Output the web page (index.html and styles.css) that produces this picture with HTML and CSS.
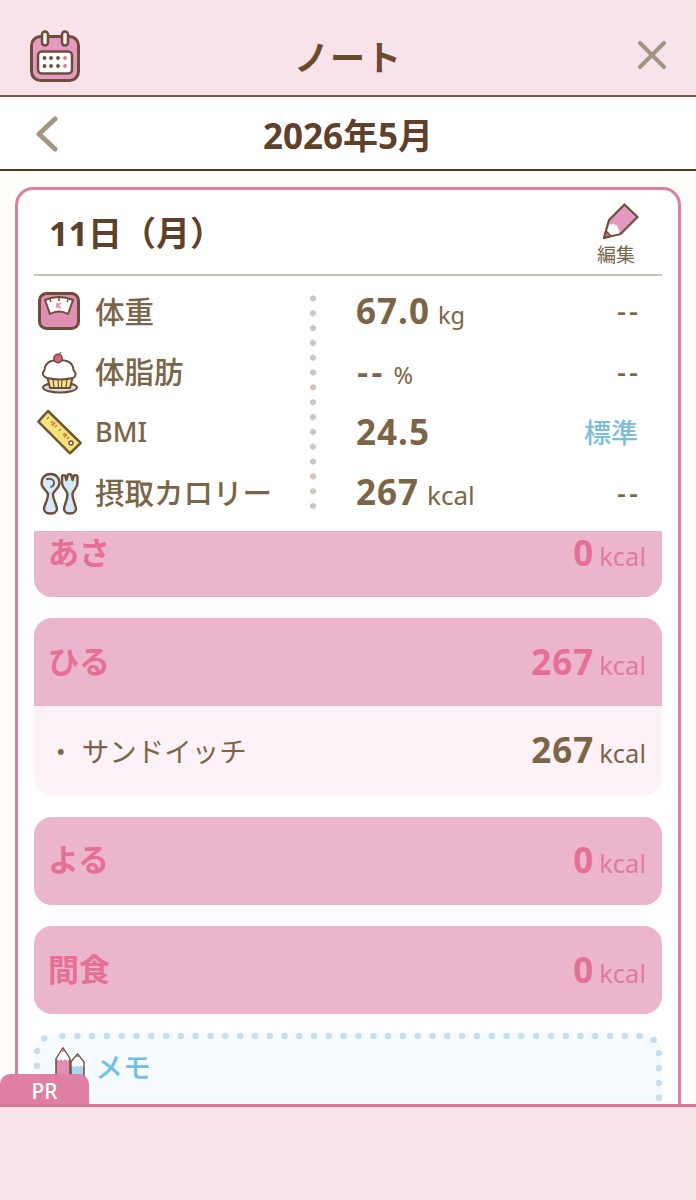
FILE: index.html
```html
<!DOCTYPE html>
<html lang="ja">
<head>
  <meta charset="UTF-8">
  <title>ノート</title>
  <link rel="stylesheet" href="styles.css">
</head>
<body>
  <header class="top-bar">
    <svg class="icon-calendar" viewBox="0 0 50 52">
      <rect x="1.500" y="6.500" width="47" height="44" rx="9" fill="#e49ac0" stroke="#6e4c3a" stroke-width="3"/>
      <rect x="12" y="1.500" width="6" height="14" rx="3" fill="#fdf3ec" stroke="#6e4c3a" stroke-width="2.500"/>
      <rect x="32" y="1.500" width="6" height="14" rx="3" fill="#fdf3ec" stroke="#6e4c3a" stroke-width="2.500"/>
      <rect x="8" y="21.500" width="34" height="22" rx="4" fill="#fff" stroke="#6e4c3a" stroke-width="2.500"/>
      <g fill="#6e4c3a">
        <circle cx="14.500" cy="28" r="1.900"/><circle cx="21" cy="28" r="1.900"/><circle cx="28" cy="28" r="1.900"/>
        <circle cx="14.500" cy="36" r="1.900"/><circle cx="21" cy="36" r="1.900"/><circle cx="28" cy="36" r="1.900"/>
      </g>
      <circle cx="35" cy="28" r="1.900" fill="#d877a8"/><circle cx="35" cy="36" r="1.900" fill="#d877a8"/>
    </svg>
    <h1 class="top-title">ノート</h1>
    <svg class="icon-close" viewBox="0 0 28 28">
      <path d="M2 2L26 26M26 2L2 26" fill="none" stroke="#a39580" stroke-width="4" stroke-linecap="round"/>
    </svg>
  </header>

  <div class="month-bar">
    <svg class="icon-back" viewBox="0 0 22 36">
      <path d="M19 3L3 18L19 33" fill="none" stroke="#a39580" stroke-width="5" stroke-linecap="round" stroke-linejoin="round"/>
    </svg>
    <div class="month-title">2026年5月</div>
  </div>

  <main class="content">
    <section class="card">
      <div class="day-head">
        <div class="day-title">11日（月）</div>
        <div class="edit">
          <svg class="icon-pencil" viewBox="0 0 36 36">
            <path d="M1 35L6 17L21.500 1.500L34.500 14L17.500 31Z" fill="#e49ac0" stroke="#6e4c3a" stroke-width="2.200" stroke-linejoin="round"/>
            <path d="M2.500 33L6.500 20.500L9 22Q10.500 19.500 12.500 22.500Q15.500 22 14.500 25.500Q17.500 26.500 16 30.500Z" fill="#fff"/>
            <path d="M1 35L3 28L8 33Z" fill="#c9776f" stroke="#6e4c3a" stroke-width="1.600" stroke-linejoin="round"/>
          </svg>
          <span class="edit-label">編集</span>
        </div>
      </div>

      <div class="stats">
        <div class="stat-sep"></div>

        <div class="stat-label">
          <svg class="stat-icon" viewBox="0 0 48 44">
            <rect x="5.500" y="2.500" width="39" height="35" rx="7" fill="#e08fb4" stroke="#6e4c3a" stroke-width="3"/>
            <path d="M11 9Q25 3 39 9L34 23Q25 18 16 23Z" fill="#fff" stroke="#6e4c3a" stroke-width="2" stroke-linejoin="round"/>
            <path d="M16 8.500L17 11M25 7V10M34 8.500L33 11" stroke="#6e4c3a" stroke-width="1.500"/>
            <path d="M23 12V17M27 12L23 14.500L27 17" fill="none" stroke="#e58db0" stroke-width="1.500"/>
          </svg>
          <span>体重</span>
        </div>
        <div class="stat-value"><span class="num">67.0</span><span class="unit unit-tight">kg</span></div>
        <div class="stat-extra">--</div>

        <div class="stat-label">
          <svg class="stat-icon" viewBox="0 0 48 44">
            <ellipse cx="26" cy="35.500" rx="17" ry="5" fill="#d9dfe3" stroke="#6e4c3a" stroke-width="2"/>
            <path d="M13 24H39L36 36H16Z" fill="#f7e48c" stroke="#6e4c3a" stroke-width="2" stroke-linejoin="round"/>
            <path d="M19 27L20 35.500M24 27L24.500 35.500M28 27L27.500 35.500M33 27L32 35.500" stroke="#6e4c3a" stroke-width="1.200"/>
            <path d="M13 26Q6 23 10.500 18Q11 8 25 8Q39 8 39.500 18Q44 23 39 26Q26 29 13 26Z" fill="#fff" stroke="#6e4c3a" stroke-width="2" stroke-linejoin="round"/>
            <circle cx="24" cy="6.500" r="4.200" fill="#d9627f" stroke="#6e4c3a" stroke-width="1.500"/>
            <path d="M25 2.500L27 0" stroke="#6e4c3a" stroke-width="1.200"/>
          </svg>
          <span>体脂肪</span>
        </div>
        <div class="stat-value"><span class="num num-dash">--</span><span class="unit unit-tight">%</span></div>
        <div class="stat-extra">--</div>

        <div class="stat-label">
          <svg class="stat-icon" viewBox="0 0 48 44">
            <path d="M14 -1L46.700 31L36 41.300L4.300 9.700Z" fill="#f7e27c" stroke="#6b5a35" stroke-width="2.500" stroke-linejoin="round"/>
            <path d="M15 5L13 7M19 9L17 11M23 13L21 15M27 17L25 19M31 21L29 23M35 25L33 27" stroke="#a58a3c" stroke-width="1.300"/>
            <path d="M18 13.500L21 10.500M30 25L33 22" stroke="#e0705a" stroke-width="2"/>
            <circle cx="37" cy="31" r="2" fill="#fff" stroke="#6b5a35" stroke-width="1.500"/>
          </svg>
          <span class="stat-latin">BMI</span>
        </div>
        <div class="stat-value"><span class="num">24.5</span></div>
        <div class="stat-extra stat-status">標準</div>

        <div class="stat-label">
          <svg class="stat-icon" viewBox="0 0 48 44">
            <path d="M16.500 1C10 1 7.500 6 7.500 10C7.500 15 12.500 17 14 21C14.500 26 10 32 10 36C10 42 23 42 23 36C23 32 18.500 26 19 21C20.500 17 25.500 15 25.500 10C25.500 6 23 1 16.500 1Z" fill="#d6e9f8" stroke="#6e4c3a" stroke-width="2.400" stroke-linejoin="round"/>
            <path d="M13 6Q20 5 20 10Q20 13 17 14" fill="none" stroke="#6e4c3a" stroke-width="1.800" stroke-linecap="round"/>
            <path d="M28 4C28 1.500 31.500 1.500 31.500 4L32.500 7L33.500 3C33.500 0.500 37.500 0.500 37.500 3L38.500 7L39.500 4C39.500 1.500 43.500 1.500 43.500 4V10C43.500 15 39 17 38.500 21C38 26 42 32 42 36C42 42 30 42 30 36C30 32 34 26 33.500 21C33 17 28 15 28 10Z" fill="#d6e9f8" stroke="#6e4c3a" stroke-width="2.400" stroke-linejoin="round"/>
          </svg>
          <span>摂取カロリー</span>
        </div>
        <div class="stat-value"><span class="num">267</span><span class="unit">kcal</span></div>
        <div class="stat-extra">--</div>
      </div>

      <div class="meals">
        <div class="meal meal-first">
          <div class="meal-head">
            <span class="meal-name">あさ</span>
            <span class="meal-total"><span class="num">0</span><span class="unit">kcal</span></span>
          </div>
        </div>
        <div class="meal">
          <div class="meal-head">
            <span class="meal-name">ひる</span>
            <span class="meal-total"><span class="num">267</span><span class="unit">kcal</span></span>
          </div>
          <div class="meal-item">
            <span class="item-name">・ サンドイッチ</span>
            <span class="item-total"><span class="num">267</span><span class="unit">kcal</span></span>
          </div>
        </div>
        <div class="meal">
          <div class="meal-head">
            <span class="meal-name">よる</span>
            <span class="meal-total"><span class="num">0</span><span class="unit">kcal</span></span>
          </div>
        </div>
        <div class="meal">
          <div class="meal-head">
            <span class="meal-name">間食</span>
            <span class="meal-total"><span class="num">0</span><span class="unit">kcal</span></span>
          </div>
        </div>

        <div class="memo">
          <svg class="memo-dots" width="628" height="140">
            <rect x="3" y="3" width="622" height="134" rx="16" fill="none" stroke="#c5dff0" stroke-width="6.500" stroke-linecap="round" stroke-dasharray="0 14.800" stroke-dashoffset="-9.500"/>
          </svg>
          <svg class="icon-pencils" viewBox="0 0 30 34">
            <path d="M1 34V12L8 1L15 12V34Z" fill="#e08fb4" stroke="#6e4c3a" stroke-width="1.500" stroke-linejoin="round"/>
            <path d="M1.500 12L8 2L14.500 12L12 14L10 12L8 14L6 12L4 14Z" fill="#fff"/>
            <path d="M6 4.500L8 1.500L10 4.500Z" fill="#c9776f"/>
            <path d="M16 34V15L22.500 7L29 15V34Z" fill="#a9d5f2" stroke="#6e4c3a" stroke-width="1.500" stroke-linejoin="round"/>
            <path d="M16.800 15L22.500 8L28.200 15V20L26 18.500L24 20L22 18.500L20 20L18 18.500L16.800 20Z" fill="#fff"/>
            <path d="M20.800 10L22.500 8L24.200 10Z" fill="#7a8ea0"/>
          </svg>
          <span class="memo-title">メモ</span>
        </div>
      </div>
    </section>
    <div class="pr-tab">PR</div>
  </main>

  <footer class="ad-area"></footer>
</body>
</html>
```

FILE: styles.css
```css
* { box-sizing: border-box; }
html, body { margin: 0; height: 100%; }
body { display: flex; flex-direction: column; height: 1200px; overflow: hidden; background: #fffdf9; color: #7c6547; font-family: "Noto Sans", "Noto Sans CJK JP", sans-serif; }

.top-bar { display: grid; grid-template-columns: 1fr auto 1fr; align-items: center; height: 97px; padding: 15px 30px 0 30px; background: #f8e3ea; border-bottom: 2px solid #7a5a45; }
.icon-calendar { width: 50px; height: 52px; margin-top: 2px; }
.top-title { margin: 0; font-size: 35px; font-weight: 700; color: #6b4a2e; letter-spacing: 1px; }
.icon-close { width: 28px; height: 28px; justify-self: end; }

.month-bar { position: relative; display: flex; align-items: center; justify-content: center; height: 74px; background: #fff; border-bottom: 2px solid #4e3524; }
.icon-back { position: absolute; left: 36px; top: 19px; width: 22px; height: 36px; }
.month-title { font-size: 35px; font-weight: 700; color: #5f4029; }

.content { position: relative; flex: 1; overflow: hidden; padding: 16px 15px 0; }
.card { padding: 0 16px 40px; background: #fff; border: 3px solid #dd7f9f; border-radius: 18px; }

.day-head { display: flex; justify-content: space-between; align-items: flex-start; height: 86px; padding: 0 23px 0 15px; border-bottom: 2px solid #c9bfb5; }
.day-title { margin-top: 19px; font-size: 34px; font-weight: 700; line-height: 48px; color: #5f4029; }
.edit { display: flex; flex-direction: column; align-items: flex-start; padding-top: 13px; }
.icon-pencil { width: 36px; height: 36px; margin-left: 6px; }
.edit-label { font-size: 19px; line-height: 26px; margin-top: 3px; }

.stats { display: grid; grid-template-columns: 276px 6px 1fr auto; grid-template-rows: repeat(4, 60.5px); align-items: center; padding: 4px 24px 0 0; height: 255px; }
.stat-sep { grid-column: 2; grid-row: 1 / 5; align-self: stretch; margin: 11px 0 9px; background: radial-gradient(circle, #cfc5c0 2.800px, transparent 3.300px) 0 0 / 6px 14.840px repeat-y; }
.stat-label { grid-column: 1; display: flex; align-items: center; gap: 13px; font-size: 29.500px; font-weight: 500; }
.stat-latin { font-size: 27px; }
.stat-icon { width: 48px; height: 44px; margin-top: 6px; flex: none; overflow: visible; }
.stat-value { grid-column: 3; padding-left: 40px; display: flex; align-items: baseline; }
.stat-extra { grid-column: 4; font-size: 28px; font-weight: 500; text-align: right; letter-spacing: 3px; margin-right: -3px; }
.stat-extra.stat-status { font-size: 27px; color: #7dbdd9; letter-spacing: 0; margin-right: 0; }
.num { font-size: 35px; font-weight: 700; letter-spacing: 1px; }
.unit { font-size: 26px; margin-left: 8px; }
.num-dash { margin-left: 1px; font-weight: 600; letter-spacing: 3px; }
.unit-tight { margin-left: 8px; font-size: 23.500px; }

.meals { height: 700px; overflow: hidden; }
.meal { margin-bottom: 21.400px; border-radius: 18px; overflow: hidden; }
.meal-first { margin-top: -22px; }
.meal-head { display: flex; justify-content: space-between; align-items: center; height: 88px; padding: 0 16px 2px 14px; background: #ebb5ce; color: #e56f95; line-height: 1; }
.meal-name { font-size: 31px; font-weight: 700; }
.meal-total, .item-total { display: flex; align-items: baseline; }
.meal-total .unit, .item-total .unit { margin-left: 5px; font-size: 25.500px; }
.meal-total .unit { color: #e27a9d; }
.meal-item { display: flex; justify-content: space-between; align-items: center; height: 89px; padding: 0 16px 2px 13px; background: #fcf2f7; line-height: 1; }
.item-name { margin-top: 3px; font-size: 27.500px; font-weight: 400; }

.memo { position: relative; display: flex; align-items: flex-start; gap: 10px; height: 140px; margin-top: -2.400px; padding: 14px 20px 0 21px; background: #f6fbff; border-radius: 20px; }
.memo-dots { position: absolute; left: 0; top: 0; }
.icon-pencils { position: relative; width: 30px; height: 34px; flex: none; }
.memo-title { position: relative; font-size: 28px; font-weight: 500; line-height: 40px; color: #72bfe8; }

.pr-tab { position: absolute; left: 0; bottom: 0; width: 89px; height: 30px; background: #de7fa3; border-radius: 10px 10px 0 0; color: #fff; font-size: 21px; font-weight: 500; line-height: 35px; text-align: center; }

.ad-area { height: 96px; background: #f8e3ea; border-top: 3px solid #d9789a; }
```
